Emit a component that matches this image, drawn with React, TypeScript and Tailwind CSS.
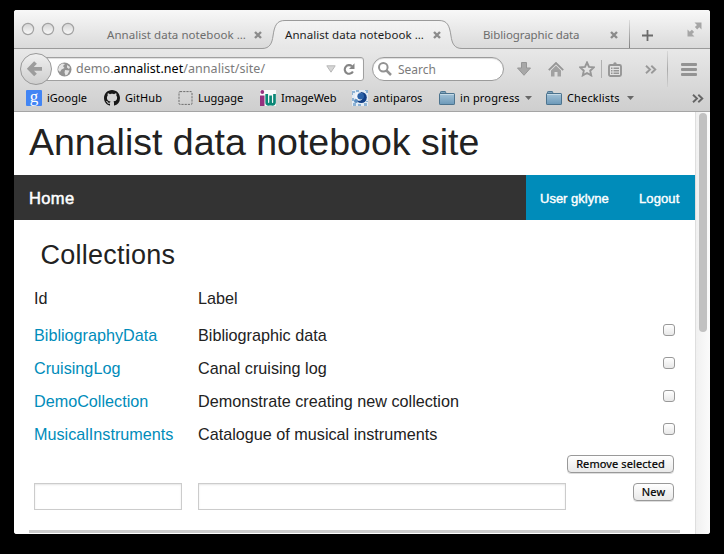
import type { ReactNode } from "react";

const chromeFont = "font-['Noto_Sans','Open_Sans',sans-serif]";
const pageFont = "font-['Liberation_Sans',Arial,sans-serif]";

function CloseIcon() {
  return (
    <svg width="8" height="8" viewBox="0 0 8 8" className="shrink-0">
      <path d="M1 1L7 7M7 1L1 7" stroke="#8b8b8b" strokeWidth="2.4" />
    </svg>
  );
}

function Folder() {
  return (
    <svg width="16" height="14" viewBox="0 0 16 14" className="shrink-0">
      <defs>
        <linearGradient id="folder" x1="0" y1="0" x2="0" y2="1">
          <stop offset="0" stopColor="#a4c3d8" />
          <stop offset="1" stopColor="#6b98b8" />
        </linearGradient>
      </defs>
      <path d="M1.5 3V1.2Q1.5.5 2.2.5H6Q6.7.5 6.7 1.2V2.5H14.5V5H1.5Z" fill="#7fa3bd" stroke="#4e7793" />
      <rect x=".5" y="2.5" width="15" height="11" rx=".6" fill="url(#folder)" stroke="#4c738e" />
      <path d="M1.2 3.5H14.8" stroke="#c5dae7" />
    </svg>
  );
}

function Chevrons({ color }: { color: string }) {
  return (
    <svg width="12" height="9" viewBox="0 0 12 9" className="shrink-0">
      <path d="M1 .7L5 4.5L1 8.3M6.3 .7L10.3 4.5L6.3 8.3" fill="none" stroke={color} strokeWidth="1.9" />
    </svg>
  );
}

function Caret() {
  return (
    <svg width="7" height="4" viewBox="0 0 7 4" className="shrink-0">
      <path d="M0 0H7L3.5 4Z" fill="#686868" />
    </svg>
  );
}

function TabStrip() {
  return (
    <div className="flex h-[39px] border-b border-[#9a9a9a] bg-linear-to-b from-[#f8f8f8] to-[#dadada]">
      <div className="flex w-[93px] shrink-0 gap-1 px-[7px] pt-3">
        {[0, 1, 2].map((n) => (
          <svg key={n} width="14" height="14" viewBox="0 0 14 14" className="mr-[2px] shrink-0">
            <defs>
              <linearGradient id={`light${n}`} x1="0" y1="0" x2="0" y2="1">
                <stop offset="0" stopColor="#d4d4d4" />
                <stop offset="1" stopColor="#fafafa" />
              </linearGradient>
            </defs>
            <circle cx="7" cy="7" r="5.6" fill={`url(#light${n})`} stroke="#a2a2a2" strokeWidth="1.2" />
          </svg>
        ))}
      </div>
      <div className="flex w-[155px] shrink-0 items-center pt-[11px] text-[#6d6d6d]">
        <span className="w-[148px] whitespace-nowrap text-[11.5px] tracking-[0.05px]">Annalist data notebook …</span>
        <CloseIcon />
      </div>
      <div className="relative flex h-[39px] w-[200px] shrink-0 items-center pl-[23px] pt-[11px] text-[#1c1c1c]">
        <svg width="200" height="29" viewBox="0 0 200 29" className="absolute left-0 top-[10px]">
          <defs>
            <linearGradient id="tab" x1="0" y1="0" x2="0" y2="1">
              <stop offset="0" stopColor="#f4f4f4" />
              <stop offset="1" stopColor="#e6e6e6" />
            </linearGradient>
          </defs>
          <path d="M0 29V28.5C8 28.5 10 23 11 16C12.5 5 15 .5 23 .5H177C185 .5 187.500 5 189 16C190 23 192 28.500 200 28.500V29Z" fill="url(#tab)" />
          <path d="M0 28.500C8 28.500 10 23 11 16C12.500 5 15 .5 23 .5H177C185 .5 187.500 5 189 16C190 23 192 28.500 200 28.500" fill="none" stroke="#9a9a9a" />
        </svg>
        <span className="relative w-[148px] whitespace-nowrap text-[11.5px] tracking-[0.05px]">Annalist data notebook …</span>
        <span className="relative flex"><CloseIcon /></span>
      </div>
      <div className="flex w-[167px] shrink-0 items-center pl-[21px] pt-[11px] text-[#6d6d6d]">
        <span className="w-[127px] whitespace-nowrap text-[11.5px] tracking-[-0.1px]">Bibliographic data</span>
        <CloseIcon />
      </div>
      <div className="mt-[10px] w-px shrink-0 bg-linear-to-b from-[#dddddd] to-[#808080]" />
      <svg width="11" height="11" viewBox="0 0 11 11" className="ml-3 mt-5 shrink-0">
        <path d="M5.500 0V11M0 5.500H11" stroke="#6b6b6b" strokeWidth="1.8" />
      </svg>
      <svg width="15" height="15" viewBox="0 0 15 15" className="ml-[34px] mt-3 shrink-0" fill="#a6a6a6">
        <path d="M7.500 .5H14.500V7.500L12.300 5.300L10.200 7.400L7.900 5.100L10 3Z" />
        <path d="M.5 7.500V14.500H7.500L5 12L7.100 9.900L4.900 7.700L2.800 9.800Z" />
      </svg>
    </div>
  );
}

function Toolbar() {
  return (
    <div className="flex h-[40px] shrink-0 items-center">
      <svg width="32" height="32" viewBox="0 0 32 32" className="relative z-10 ml-[6px] shrink-0">
        <defs>
          <linearGradient id="back" x1="0" y1="0" x2="0" y2="1">
            <stop offset="0" stopColor="#f0f0f0" />
            <stop offset="1" stopColor="#cecece" />
          </linearGradient>
        </defs>
        <circle cx="16" cy="16" r="15.500" fill="url(#back)" stroke="#999" />
        <path d="M15.500 9.500L9.500 15.800L15.500 22M10 15.800H22" fill="none" stroke="#9c9c9c" strokeWidth="3.800" />
      </svg>
      <div className="-ml-2 flex h-6 w-[320px] shrink-0 items-center rounded-r-[3px] border border-[#a0a0a0] bg-white pl-[12px] shadow-[inset_0_1px_1px_#ddd]">
        <svg width="15" height="15" viewBox="0 0 15 15" className="shrink-0">
          <circle cx="7.500" cy="7.500" r="7" fill="#929292" />
          <path d="M2 4L5 1.500L8 2L6 4L7.500 6L4.500 7.500L3 10L1 8ZM10 3L13 5L12 7L10 5.500ZM8 8L12.500 8.500L10.500 12.500L8.500 13.500L7.500 10.500Z" fill="#e4e4e4" />
        </svg>
        <span className="ml-1 w-[250px] whitespace-nowrap pt-px text-[12.500px] tracking-[0.05px] text-[#7b7b7b]">
          demo.<span className="text-black">annalist.net</span>/annalist/site/
        </span>
        <svg width="10" height="8" viewBox="0 0 10 8" className="shrink-0">
          <path d="M.8 .8H9.200L5 7.200Z" fill="#d6d6d6" stroke="#b8b8b8" />
        </svg>
        <svg width="12" height="12" viewBox="0 0 12 12" className="ml-[7px] shrink-0">
          <path d="M9 3.300A4.300 4.300 0 1 0 9.900 8.400" fill="none" stroke="#858585" strokeWidth="2.100" />
          <path d="M11.500 .3V6H6Z" fill="#858585" />
        </svg>
      </div>
      <div className="ml-[8px] flex h-6 w-[132px] shrink-0 items-center rounded-full border border-[#9b9b9b] bg-white pl-[5px] shadow-[inset_0_1px_1px_#ddd]">
        <svg width="14" height="14" viewBox="0 0 14 14" className="shrink-0">
          <circle cx="5.300" cy="5.300" r="4.300" fill="none" stroke="#929292" strokeWidth="2" />
          <path d="M8.500 8.500L13 13" stroke="#929292" strokeWidth="2.500" />
        </svg>
        <span className="ml-[6px] whitespace-nowrap pt-px text-[12px] text-[#7b7b7b]">Search</span>
      </div>
      <svg width="14" height="14" viewBox="0 0 14 14" className="ml-[13px] shrink-0">
        <path d="M4.500 .5H9.500V6H13.500L7 13.300L.5 6H4.500Z" fill="#a8a8a8" stroke="#969696" />
      </svg>
      <svg width="16" height="15" viewBox="0 0 16 15" className="ml-[17px] shrink-0">
        <path d="M.8 8.200L8 1L15.200 8.200" fill="none" stroke="#959595" strokeWidth="1.800" />
        <path d="M3 8.400L8 3.500L13 8.400V14.500H9.500V10H6.500V14.500H3Z" fill="#a1a1a1" />
      </svg>
      <svg width="16" height="16" viewBox="0 0 16 16" className="ml-[15px] shrink-0">
        <path d="M8 1.500L10 5.900L14.800 6.400L11.200 9.700L12.200 14.400L8 12L3.800 14.400L4.800 9.700L1.200 6.400L6 5.900Z" fill="#e2e2e2" stroke="#979797" strokeWidth="1.900" />
      </svg>
      <div className="ml-[6px] h-[18px] w-px shrink-0 bg-[#b0b0b0]" />
      <svg width="14" height="15" viewBox="0 0 14 15" className="ml-[6px] shrink-0">
        <rect x="1" y="3" width="12" height="11" rx="1.500" fill="#e2e2e2" stroke="#969696" strokeWidth="1.900" />
        <path d="M3.500 4V2.200H5.200Q5.300 .3 7 .3T8.800 2.200H10.500V4Z" fill="#969696" />
        <path d="M3 6.200H4.500M5.500 6.200H11M3 8.700H4.500M5.500 8.700H11M3 11.200H4.500M5.500 11.200H11" stroke="#969696" strokeWidth="1.500" />
      </svg>
      <div className="ml-[23px]"><Chevrons color="#999999" /></div>
      <div className="ml-[10px] h-9 w-px shrink-0 bg-linear-to-b from-[#d9d9d9] via-[#a9a9a9] to-[#d0d0d0]" />
      <div className="ml-[13px] flex flex-col gap-[2px]">
        {[0, 1, 2].map((n) => (
          <div key={n} className="h-[3px] w-4 rounded-[1px] bg-[#939393]" />
        ))}
      </div>
    </div>
  );
}

function Bookmark({ icon, label, box, text }: { icon: ReactNode; label: string; box: string; text?: string }) {
  return (
    <div className={`flex shrink-0 items-center ${box}`}>
      {icon}
      <span className={`ml-[5px] whitespace-nowrap text-[11px] text-black ${text ?? ""}`}>{label}</span>
    </div>
  );
}

function BookmarksBar() {
  return (
    <div className="flex h-[23px] items-center border-b border-[#a5a5a5] pb-1 pl-3">
      <Bookmark
        box="w-[78px]"
        label="iGoogle"
        icon={
          <div className="flex h-4 w-4 shrink-0 items-center justify-center rounded-[1px] bg-[#4285f4] pb-[4px] font-['Liberation_Serif',serif] text-[17px] leading-none text-white">
            g
          </div>
        }
      />
      <Bookmark
        box="w-[74px]"
        label="GitHub"
        text="tracking-[0.1px]"
        icon={
          <svg width="16" height="16" viewBox="0 0 16 16" className="shrink-0">
            <path d="M8 0C3.580 0 0 3.580 0 8c0 3.540 2.290 6.530 5.470 7.590.4.070.55-.17.55-.38 0-.19-.01-.82-.01-1.490-2.010.37-2.530-.49-2.690-.94-.09-.23-.48-.94-.82-1.130-.28-.15-.68-.52-.01-.53.63-.01 1.080.58 1.230.82.72 1.210 1.870.87 2.330.66.07-.52.28-.87.51-1.070-1.780-.2-3.640-.89-3.640-3.950 0-.87.31-1.590.82-2.150-.08-.2-.36-1.020.08-2.120 0 0 .67-.21 2.200.82.64-.18 1.320-.27 2-.27s1.360.09 2 .27c1.530-1.040 2.200-.82 2.200-.82.44 1.100.16 1.920.08 2.120.51.56.82 1.270.82 2.150 0 3.070-1.870 3.750-3.650 3.950.29.25.54.73.54 1.480 0 1.070-.01 1.930-.01 2.200 0 .21.15.46.55.38A8 8 0 0 0 16 8c0-4.420-3.580-8-8-8Z" fill="#171717" />
          </svg>
        }
      />
      <Bookmark
        box="w-[82px]"
        label="Luggage"
        icon={
          <svg width="15" height="14" viewBox="0 0 15 14" className="shrink-0">
            <rect x="1" y=".6" width="13" height="12.800" rx="1" fill="none" stroke="#6f6f6f" strokeDasharray="2.200 1" />
          </svg>
        }
      />
      <Bookmark
        box="w-[92px]"
        label="ImageWeb"
        text="tracking-[-0.1px]"
        icon={
          <svg width="16" height="16" viewBox="0 0 16 16" className="shrink-0">
            <rect width="16" height="16" fill="#fafafa" />
            <circle cx="2.300" cy="2" r="1.900" fill="#95317f" />
            <path d="M0 5.500H4.500V16H0Z" fill="#95317f" />
            <path d="M6.700 4V12.500Q6.700 14.300 8.500 14.300T10.600 12.500V5.500M10.600 12.500Q10.600 14.300 12.500 14.300T14.500 12.500V4" fill="none" stroke="#0b8776" strokeWidth="2.700" />
          </svg>
        }
      />
      <Bookmark
        box="w-[87px]"
        label="antiparos"
        text="tracking-[0.05px]"
        icon={
          <svg width="16" height="16" viewBox="0 0 16 16" className="shrink-0">
            <rect width="16" height="16" fill="#e3ecf5" />
            <path d="M0 1H3V3H1V5H0ZM4 0H7V2H4ZM13 0H16V3H14V1H13ZM0 8H2V11H0ZM1 13H4V16H1ZM12 13H15V16H12ZM14 11H16V12H14ZM6 14H9V16H6Z" fill="#8db2d4" />
            <circle cx="9.200" cy="7.500" r="5.600" fill="#123f86" />
            <circle cx="7" cy="6.500" r="4.200" fill="#f2f6fb" />
            <circle cx="8.700" cy="6.300" r="3.300" fill="#2b62a8" />
            <circle cx="4" cy="11" r="2" fill="#5b8dc0" />
          </svg>
        }
      />
      <Bookmark box="w-[86px]" label="in progress" text="tracking-[0.15px]" icon={<Folder />} />
      <div className="flex w-[21px] shrink-0"><Caret /></div>
      <Bookmark box="w-[81px]" label="Checklists" text="tracking-[0.15px]" icon={<Folder />} />
      <Caret />
      <div className="ml-[58px]"><Chevrons color="#666666" /></div>
    </div>
  );
}

const collections = [
  { id: "BibliographyData", label: "Bibliographic data" },
  { id: "CruisingLog", label: "Canal cruising log" },
  { id: "DemoCollection", label: "Demonstrate creating new collection" },
  { id: "MusicalInstruments", label: "Catalogue of musical instruments" },
];

const button =
  "h-[18px] shrink-0 whitespace-nowrap rounded-[4px] border border-[#999] bg-linear-to-b from-white to-[#e9e9e9] text-center text-[11px] leading-[16px] tracking-[0.1px] text-black shadow-[0_1px_0_#ddd] [-webkit-text-stroke:0.2px_black]";

function Page() {
  return (
    <div className={`w-[681px] shrink-0 bg-white text-[16.2px] text-[#222] ${pageFont}`}>
      <h1 className="h-[63px] whitespace-nowrap pl-[15px] pt-[9px] text-[37.500px] leading-[42px]">Annalist data notebook site</h1>
      <nav className="flex h-[45px] items-center justify-between bg-[#333] text-white">
        <span className="pl-[15px] pt-px text-[16.500px] tracking-[0.35px] [-webkit-text-stroke:0.5px_white]">Home</span>
        <div className="flex h-full w-[169px] items-center bg-[#008cba] pl-[14px] pt-[2px] text-[13px] [-webkit-text-stroke:0.4px_white]">
          <span className="w-[99px]">User gklyne</span>
          <span className="tracking-[0.1px]">Logout</span>
        </div>
      </nav>
      <h2 className="h-[60px] pl-[26.500px] pt-[19px] text-[27px] leading-[32px] tracking-[0.25px]">Collections</h2>
      <div className="flex h-[38px] pl-5 pt-[6px] leading-[24px]">
        <span className="w-[164px]">Id</span>
        <span>Label</span>
      </div>
      {collections.map((row) => (
        <div key={row.id} className="flex h-[33px] pl-5 pr-5 pt-[5px] leading-[24px]">
          <a className="w-[164px] whitespace-nowrap text-[#008cba]">{row.id}</a>
          <span className="grow whitespace-nowrap">{row.label}</span>
          <input
            type="checkbox"
            className="mt-px h-[12px] w-[12px] appearance-none rounded-[3px] border border-[#999] bg-linear-to-b from-white to-[#e8e8e8]"
          />
        </div>
      ))}
      <div className={`flex h-7 justify-end pr-[21px] pt-[5px] ${chromeFont}`}>
        <button className={`${button} w-[107px]`}>Remove selected</button>
      </div>
      <div className="flex h-[52px] pl-5 pr-[21px] pt-[5px]">
        <input className="h-[27px] w-[148px] border border-[#ccc] shadow-[inset_0_1px_2px_rgba(0,0,0,0.1)]" />
        <input className="ml-4 h-[27px] w-[368px] border border-[#ccc] shadow-[inset_0_1px_2px_rgba(0,0,0,0.1)]" />
        <button className={`${button} ${chromeFont} ml-auto w-[41px]`}>New</button>
      </div>
      <div className="ml-[15px] h-[3px] w-[651px] bg-[#ccc]" />
    </div>
  );
}

export default function App() {
  return (
    <div className="h-[554px] w-[724px] overflow-hidden bg-black pl-[14px] pt-[10px]">
      <div className="flex h-[524px] w-[696px] flex-col overflow-hidden rounded-[3px] bg-white">
        <header className={`h-[102px] shrink-0 bg-linear-to-b from-[#e7e7e7] from-40% to-[#cecece] ${chromeFont}`}>
          <TabStrip />
          <Toolbar />
          <BookmarksBar />
        </header>
        <div className="flex grow">
          <Page />
          <div className="grow border-l border-[#dedede] bg-linear-to-r from-[#f0f0f0] to-[#fbfbfb] pl-[3px] pt-px">
            <div className="h-[219px] w-2 rounded-full bg-[#c1c1c1]" />
          </div>
        </div>
      </div>
    </div>
  );
}
